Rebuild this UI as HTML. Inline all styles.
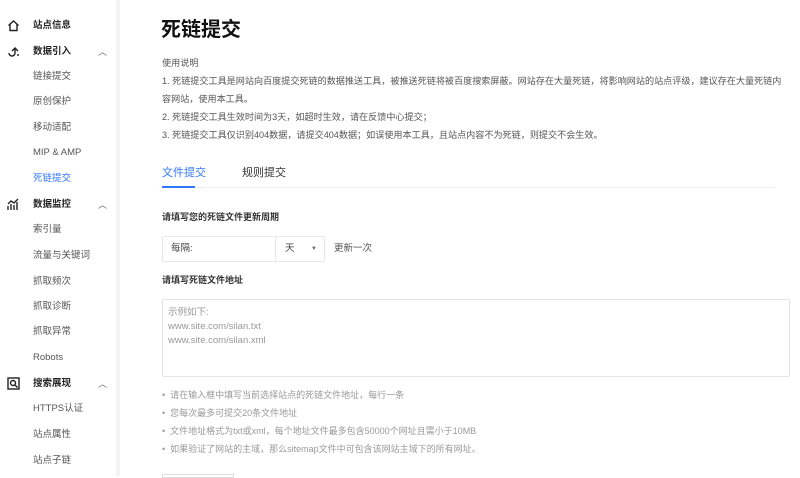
<!DOCTYPE html>
<html><head><meta charset="utf-8"><style>
*{margin:0;padding:0;box-sizing:border-box}
body{width:800px;height:476px;overflow:hidden;background:#fff;font-family:"Liberation Sans","Noto Sans CJK SC",sans-serif;position:relative;color:#333}
.sb{position:absolute;left:0;top:0;width:120px;height:476px;background:#fff;border-right:4px solid #f3f3f5}
.it{position:absolute;left:33px;font-size:9.5px;color:#555;line-height:12px}
.g{font-weight:bold;color:#222}
.ic{position:absolute;left:7px;width:13px;height:13px}
.car{position:absolute;left:98px;font-size:9px;color:#666}
.a{position:absolute;font-size:9.5px;line-height:12px}
</style></head><body>
<div class="sb">
<svg class="ic" style="top:19px" viewBox="0 0 13 13" fill="none" stroke="#222" stroke-width="1.4"><path d="M1.5 6.5L6.5 2l5 4.5M3 5.5V11.5h7V5.5"/></svg>
<div class="it g" style="top:20px">站点信息</div>
<svg class="ic" style="top:45px" viewBox="0 0 13 13" fill="none" stroke="#222" stroke-width="1.4"><path d="M2 8a3 3 0 0 0 6 0V3M5 6l3-3 3 3M11 9v2"/></svg>
<div class="it g" style="top:46px">数据引入</div><div class="car" style="top:45px">︿</div>
<div class="it" style="top:71px">链接提交</div>
<div class="it" style="top:96px">原创保护</div>
<div class="it" style="top:122px">移动适配</div>
<div class="it" style="top:147px">MIP &amp; AMP</div>
<div class="it" style="top:173px;color:#3377ff">死链提交</div>
<svg class="ic" style="top:198px" viewBox="0 0 13 13" fill="none" stroke="#222" stroke-width="1.4"><path d="M1 12V8M4 12V6M7 12V7M10 12V4M1 6l3-3 3 2 4-4"/></svg>
<div class="it g" style="top:199px">数据监控</div><div class="car" style="top:198px">︿</div>
<div class="it" style="top:224px">索引量</div>
<div class="it" style="top:250px">流量与关键词</div>
<div class="it" style="top:276px">抓取频次</div>
<div class="it" style="top:301px">抓取诊断</div>
<div class="it" style="top:326px">抓取异常</div>
<div class="it" style="top:352px">Robots</div>
<svg class="ic" style="top:377px" viewBox="0 0 13 13" fill="none" stroke="#222" stroke-width="1.4"><rect x="1" y="1" width="11" height="11"/><circle cx="6" cy="6" r="2.5"/><path d="M8 8l2.5 2.5"/></svg>
<div class="it g" style="top:378px">搜索展现</div><div class="car" style="top:377px">︿</div>
<div class="it" style="top:403px">HTTPS认证</div>
<div class="it" style="top:429px">站点属性</div>
<div class="it" style="top:455px">站点子链</div>
</div>

<div class="a" style="left:161px;top:18px;font-size:20px;line-height:24px;font-weight:bold;color:#111">死链提交</div>
<div class="a" style="left:162px;top:54px;color:#555;line-height:18px;font-size:9.1px;width:622px">使用说明<br>1. 死链提交工具是网站向百度提交死链的数据推送工具，被推送死链将被百度搜索屏蔽。网站存在大量死链，将影响网站的站点评级，建议存在大量死链内容网站，使用本工具。<br>2. 死链提交工具生效时间为3天，如超时生效，请在反馈中心提交；<br>3. 死链提交工具仅识别404数据，请提交404数据；如误使用本工具，且站点内容不为死链，则提交不会生效。</div>
<div class="a" style="left:162px;top:166px;font-size:11px;line-height:14px;color:#3377ff">文件提交</div>
<div class="a" style="left:242px;top:166px;font-size:11px;line-height:14px;color:#333">规则提交</div>
<div style="position:absolute;left:162px;top:187px;width:613px;height:1px;background:#eee"></div>
<div style="position:absolute;left:162px;top:186px;width:33px;height:2px;background:#3377ff"></div>
<div class="a" style="left:162px;top:211px;font-weight:bold;color:#333;font-size:9px">请填写您的死链文件更新周期</div>
<div style="position:absolute;left:162px;top:236px;width:163px;height:26px;border:1px solid #e8e8e8;border-radius:2px"></div>
<div style="position:absolute;left:275px;top:236px;width:1px;height:26px;background:#e8e8e8"></div>
<div class="a" style="left:171px;top:243px;color:#444">每隔:</div>
<div class="a" style="left:285px;top:243px;color:#444">天</div>
<div class="a" style="left:311px;top:243px;color:#666;font-size:6px">▼</div>
<div class="a" style="left:334px;top:243px;color:#555">更新一次</div>
<div class="a" style="left:162px;top:274px;font-weight:bold;color:#333;font-size:9px">请填写死链文件地址</div>
<div style="position:absolute;left:162px;top:299px;width:628px;height:78px;border:1px solid #e4e4e4;border-radius:2px"></div>
<div class="a" style="left:168px;top:306px;color:#999;line-height:14px">示例如下:<br>www.site.com/silan.txt<br>www.site.com/silan.xml</div>
<div class="a" style="left:162px;top:386px;color:#999;line-height:18px;font-size:9px">• &nbsp;请在输入框中填写当前选择站点的死链文件地址，每行一条<br>• &nbsp;您每次最多可提交20条文件地址<br>• &nbsp;文件地址格式为txt或xml，每个地址文件最多包含50000个网址且需小于10MB<br>• &nbsp;如果验证了网站的主域，那么sitemap文件中可包含该网站主域下的所有网址。</div>
<div style="position:absolute;left:162px;top:474px;width:72px;height:4px;border:1px solid #ddd"></div>
</body></html>
